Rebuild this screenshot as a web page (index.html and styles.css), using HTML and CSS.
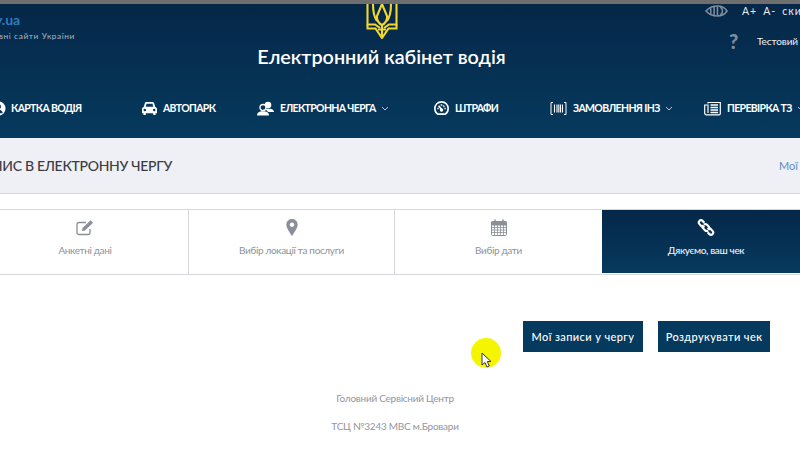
FILE: index.html
```html
<!DOCTYPE html>
<html lang="uk">
<head>
<meta charset="utf-8">
<title>Електронний кабінет водія</title>
<link rel="stylesheet" href="styles.css">
</head>
<body>
<div class="strip"></div>
<header class="header">
  <div class="head-top">
    <div class="brand">
      <span class="brand-name">y.ua</span>
      <span class="brand-sub">Державні сайти України</span>
    </div>
    <div class="head-center">
      <svg class="emblem" viewBox="0 0 32 35" fill="none" stroke="#f3d62e" stroke-width="2.100">
        <path d="M1.500 0V20.500H9L14 24M30.500 0V20.500H23L18 24"/>
        <path d="M7 0C7 8 8 13 11 17M25 0C25 8 24 13 21 17"/>
        <path d="M16 0L11 12C10.500 16 13 20 16 21C19 20 21.500 16 21 12Z"/>
        <path d="M1.500 20.500V24.500H9.500L16 34L22.500 24.500H30.500V20.500"/>
        <path d="M16 21V33M12 25.500H20"/>
      </svg>
      <h1 class="title">Електронний кабінет водія</h1>
    </div>
    <div class="tools">
      <div class="tools-row">
        <svg class="eye" viewBox="0 0 24 12" fill="none" stroke="#7f8d9c" stroke-width="1.600">
          <path d="M1 6C5 1.500 10 .8 13 .8C18 .8 21 3 23 6C21 9 18 11.200 13 11.200C10 11.200 5 10.500 1 6Z"/>
          <path d="M6 3V9M9.500 1.500V10.500M13 1V11M16 2C19 4 19 8 16 10"/>
        </svg>
        <span class="font-tool">A+</span>
        <span class="font-tool">A-</span>
        <span class="font-tool">скинути</span>
      </div>
      <div class="user-row">
        <span class="help">?</span>
        <span class="user">Тестовий Користувач</span>
      </div>
    </div>
  </div>
  <nav class="nav">
    <a class="nav-item">
      <svg class="nav-icon" viewBox="0 0 16 16" fill="#fff"><circle cx="8" cy="8" r="7.500"/><circle cx="8" cy="6" r="2.600" fill="#05345a"/><path d="M3.500 13C4 10 6 9.500 8 9.500S12 10 12.500 13Z" fill="#05345a"/></svg>
      <span>КАРТКА ВОДІЯ</span>
    </a>
    <a class="nav-item">
      <svg class="nav-icon" viewBox="0 0 16 14" fill="#fff"><path d="M3 1.500C3.300.5 4 0 5 0H11C12 0 12.700.5 13 1.500L14 5C15.300 5.500 16 6.500 16 7.500V12H14.500V14H12V12H4V14H1.500V12H0V7.500C0 6.500.7 5.500 2 5ZM4 5H12L11.200 2H4.800Z" fill-rule="evenodd"/><circle cx="3" cy="8.500" r="1.300" fill="#05345a"/><circle cx="13" cy="8.500" r="1.300" fill="#05345a"/></svg>
      <span>АВТОПАРК</span>
    </a>
    <a class="nav-item">
      <svg class="nav-icon wide" viewBox="0 0 17 14" fill="#fff"><circle cx="11" cy="3.500" r="3.300"/><path d="M8 8C9 7 13 7 14.500 7.500C16 8 17 9 17 10.500H11C10.500 9.500 9.500 8.500 8 8Z"/><circle cx="6" cy="6" r="3" fill="#05345a" stroke="#fff" stroke-width="1.300"/><path d="M0 14C0 11 2.500 9.800 6 9.800S12 11 12 14Z"/></svg>
      <span>ЕЛЕКТРОННА ЧЕРГА</span>
      <svg class="chev" viewBox="0 0 8 5" fill="none" stroke="#b9c4cf" stroke-width="1"><path d="M1 1L4 4L7 1"/></svg>
    </a>
    <a class="nav-item">
      <svg class="nav-icon" viewBox="0 0 16 16" fill="none" stroke="#fff" stroke-width="1.700"><path d="M4 14C1.500 12.500.9 10.500.9 8C.9 4 4 .9 8 .9S15.100 4 15.100 8C15.100 10.500 14.500 12.500 12 14Z"/><path d="M8 9L5 5M3.500 8H5M11 8H12.500M8 3.500V5M11 5L10 6"/><circle cx="8" cy="9.500" r="1" fill="#fff"/></svg>
      <span>ШТРАФИ</span>
    </a>
    <a class="nav-item">
      <svg class="nav-icon wide" viewBox="0 0 17 14" fill="none" stroke="#fff" stroke-width="1"><path d="M3 1H1V13H3M14 1H16V13H14"/><path d="M4.500 3V11M7 3V11M8.800 3V11M10.500 3V11M12.500 3V11" stroke-width="1.100"/></svg>
      <span>ЗАМОВЛЕННЯ ІНЗ</span>
      <svg class="chev" viewBox="0 0 8 5" fill="none" stroke="#b9c4cf" stroke-width="1"><path d="M1 1L4 4L7 1"/></svg>
    </a>
    <a class="nav-item">
      <svg class="nav-icon wide" viewBox="0 0 17 14" fill="none" stroke="#fff" stroke-width="1.200"><path d="M4 2V1H16.300V12C16.300 12.800 15.800 13.300 15 13.300H2.500C1.300 13.300.7 12.500.7 11.500V3.500H4V11.500"/><path d="M6.500 3.500H14M6.500 6H14M6.500 8.500H14M6.500 11H14" stroke-width="1.400"/></svg>
      <span>ПЕРЕВІРКА ТЗ</span>
      <svg class="chev" viewBox="0 0 8 5" fill="none" stroke="#b9c4cf" stroke-width="1"><path d="M1 1L4 4L7 1"/></svg>
    </a>
  </nav>
</header>
<section class="bar">
  <div class="bar-title"><h2>ЗАПИС В ЕЛЕКТРОННУ ЧЕРГУ</h2></div>
  <a class="bar-link">Мої записи</a>
</section>
<section class="steps">
  <div class="step">
    <svg class="step-icon" viewBox="0 0 18 16" fill="none" stroke="#8a8f9a" stroke-width="1.300"><path d="M14 9.500V13C14 14.200 13.200 15 12 15H3C1.800 15 1 14.200 1 13V5C1 3.800 1.800 3 3 3H10"/><path d="M6.500 8.500L14.500 .8L17 3.200L9 11L6 11.500Z" fill="#8a8f9a" stroke="none"/></svg>
    <span>Анкетні дані</span>
  </div>
  <div class="step">
    <svg class="step-icon" viewBox="0 0 10 15" fill="#8a8f9a"><path fill-rule="evenodd" d="M5 0C8 0 10 2.200 10 5C10 7.500 7 12 5 15C3 12 0 7.500 0 5C0 2.200 2 0 5 0ZM5 3C3.900 3 3 3.900 3 5S3.900 7 5 7S7 6.100 7 5S6.100 3 5 3Z"/></svg>
    <span>Вибір локації та послуги</span>
  </div>
  <div class="step">
    <svg class="step-icon" viewBox="0 0 16 17" fill="none" stroke="#8a8f9a"><path d="M1.500 2.500H14.500C15 2.500 15.500 3 15.500 3.500V15.500C15.500 16 15 16.500 14.500 16.500H1.500C1 16.500.5 16 .5 15.500V3.500C.5 3 1 2.500 1.500 2.500Z"/><path d="M.5 3H15.500V6H.5Z" fill="#8a8f9a"/><path d="M3.500 6V16M6.500 6V16M9.500 6V16M12.500 6V16M.5 8.500H15.500M.5 11H15.500M.5 13.500H15.500" stroke-width=".8"/><path d="M4 .5V4M12 .5V4" stroke-width="1.500"/></svg>
    <span>Вибір дати</span>
  </div>
  <div class="step step-active">
    <svg class="step-icon" viewBox="0 0 16 16" fill="none" stroke="#fff" stroke-width="2"><path d="M6.500 3.500L5 2C4 1 2.700 1 1.800 1.800C1 2.700 1 4 2 5L3.500 6.500C4.500 7.500 5.500 7.500 6.500 6.500"/><path d="M9.500 12.500L11 14C12 15 13.300 15 14.200 14.200C15 13.300 15 12 14 11L12.500 9.500C11.500 8.500 10.500 8.500 9.500 9.500"/><path d="M6 5.500C7 4.500 8 4.500 9 5.500L10.500 7C11.500 8 11.500 9 10.500 10M5.500 6C4.500 7 4.500 8 5.500 9L7 10.500C8 11.500 9 11.500 10 10.500"/></svg>
    <span>Дякуємо, ваш чек</span>
  </div>
</section>
<section class="actions">
  <a class="btn btn-queue">Мої записи у чергу</a>
  <a class="btn btn-print">Роздрукувати чек</a>
</section>
<section class="place">
  <p>Головний Сервісний Центр</p>
  <p>ТСЦ №3243 МВС м.Бровари</p>
</section>
<div class="pointer">
  <svg class="arrow" viewBox="0 0 11 16"><path d="M1 1V13L4 10.500L6 15L8.300 14L6.300 9.500H10Z" fill="#fff" stroke="#333" stroke-width="1"/></svg>
</div>
</body>
</html>
```
FILE: styles.css
```css
* { box-sizing: border-box; }
html, body { margin: 0; height: 450px; overflow: hidden; background: #fff; }
body { font-family: Lato, "Noto Sans", sans-serif; color: #333; position: relative; width: 800px; }
h1, h2, p { margin: 0; font-weight: inherit; }

.strip { height: 4px; background: #6e6e6e; }

.header { height: 134px; background: linear-gradient(180deg, #052748 0%, #053a5e 100%); color: #fff; }
.head-top { height: 84px; display: grid; grid-template-columns: 75px 613px 112px; }

.brand { display: flex; flex-direction: column; align-items: flex-end; padding-top: 7px; white-space: nowrap; }
.brand-name { width: 75px; margin-right: 5px; font-size: 14px; line-height: 18px; font-weight: 700; color: #2f7cbe; }
.brand-sub { margin-top: 1px; font-size: 8.300px; line-height: 12px; letter-spacing: .6px; color: #aab6c3; }

.head-center { display: flex; flex-direction: column; align-items: center; }
.emblem { width: 32px; height: 35px; display: block; }
.title { margin-top: 3px; font-size: 19.800px; line-height: 28px; font-weight: 600; white-space: nowrap; }

.tools { padding: 1px 0 0 17px; white-space: nowrap; }
.tools-row { display: flex; align-items: center; height: 12px; }
.eye { width: 23px; height: 12px; margin-right: 14px; flex: none; }
.font-tool { font-size: 10.500px; letter-spacing: 1px; margin-right: 6px; color: #e6ebf0; }
.user-row { display: flex; align-items: center; margin-top: 13px; height: 22px; margin-left: 22px; }
.help { flex: none; width: 24px; margin-left: -3px; padding-left: 5px; font-size: 20px; font-weight: 900; color: #7f8d9c; }
.user { font-size: 10px; color: #f0f3f6; margin-left: 9px; letter-spacing: -.1px; }

.nav { height: 40px; margin-left: -9px; display: grid; grid-template-columns: 151px 115px 177px 116px 154px 120px; align-items: center; white-space: nowrap; }
.nav-item { display: flex; align-items: center; font-size: 10.500px; font-weight: 700; letter-spacing: -.65px; }
.nav-icon { width: 15px; height: 15px; margin-right: 6px; flex: none; }
.nav-item:first-child .nav-icon { margin-right: 5px; }
.nav-icon.wide { width: 17px; }
.chev { width: 8px; height: 5px; margin-left: 5px; flex: none; }

.bar { height: 56px; background: #eff0f6; border-bottom: 1px solid #d6d8de; display: flex; align-items: center; justify-content: space-between; white-space: nowrap; }
.bar-title { width: 172px; display: flex; justify-content: flex-end; }
.bar-title h2 { font-size: 14px; letter-spacing: -.3px; font-weight: 500; color: #3a3c42; flex: none; }
.bar-link { width: 21px; font-size: 11px; color: #5f8abb; }

.steps { margin: 15px 0 0 -18px; height: 66px; display: grid; grid-template-columns: 207px 206px 207px 208px; border-top: 1px solid #d6d8de; border-bottom: 1px solid #d6d8de; }
.step { display: flex; flex-direction: column; align-items: center; padding-top: 9px; font-size: 10px; letter-spacing: -.35px; color: #8f929a; border-right: 1px solid #d6d8de; }
.step:nth-child(3) { border-right: 0; }
.step-icon { width: 18px; height: 17px; display: block; margin-bottom: 8px; }
.step-active { background: linear-gradient(180deg, #052748, #053a5e); color: #eef1f5; border-right: 0; font-weight: 500; margin-bottom: 1px; }

.actions { margin-top: 46px; height: 32px; display: flex; justify-content: flex-end; gap: 15px; padding-right: 30px; }
.btn { height: 31px; display: flex; align-items: center; justify-content: center; background: #053a5e; color: #fff; font-size: 11px; font-weight: 500; letter-spacing: .4px; white-space: nowrap; }
.btn-queue { width: 120px; }
.btn-print { width: 112px; }

.place { margin-top: 38px; padding-right: 10px; display: flex; flex-direction: column; align-items: center; gap: 14px; font-size: 10px; letter-spacing: -.25px; line-height: 14px; color: #94969e; }

.pointer { position: absolute; left: 471px; top: 338px; width: 30px; height: 30px; border-radius: 50%; background: #f6f500; }
.arrow { position: absolute; left: 10px; top: 14px; width: 11px; height: 16px; }
```
